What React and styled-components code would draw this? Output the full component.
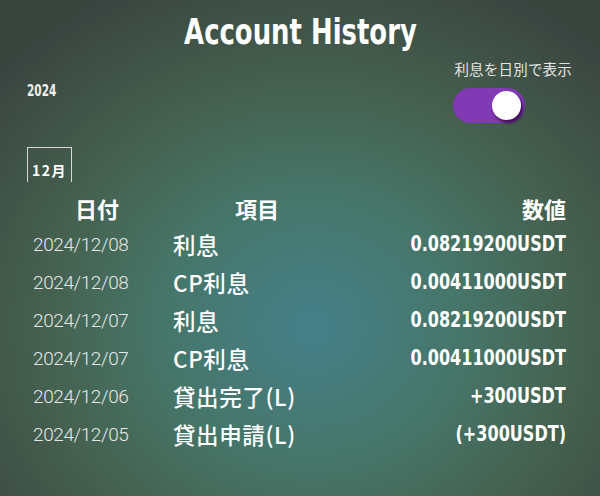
import React from "react";
import styled, { createGlobalStyle } from "styled-components";

const Global = createGlobalStyle`
  html, body { margin: 0; padding: 0; }
  body { width: 600px; height: 496px; overflow: hidden; }
`;

const Page = styled.div`
  width: 600px;
  height: 496px;
  box-sizing: border-box;
  padding: 0 34px 0 27px;
  background: radial-gradient(ellipse 70% 76% at 52% 66%, #45808a 0%, #467669 36%, #45614f 64%, #3a4540 100%);
  color: #fff;
  font-family: "Noto Sans CJK JP", sans-serif;
  display: flex;
  flex-direction: column;
`;

const Condensed = styled.span`
  display: inline-block;
  font-weight: 700;
  transform: scaleX(${(p) => p.$sx});
  transform-origin: ${(p) => p.$origin || "center"} center;
  white-space: nowrap;
`;

const condensedFont = `"DejaVu Sans Condensed", "DejaVu Sans", sans-serif`;

const Title = styled.h1`
  margin: 10px 0 0 0;
  text-align: center;
  font-family: ${condensedFont};
  font-size: 36px;
  line-height: 44px;
  color: #fff;
  padding-left: 7px;
`;

const Controls = styled.div`
  display: flex;
  justify-content: space-between;
  align-items: flex-start;
  margin-top: 6px;
`;

const Year = styled.div`
  margin-top: 22px;
  font-family: ${condensedFont};
  font-size: 15px;
  color: #f2f2f2;
`;

const ToggleBox = styled.div`
  display: flex;
  flex-direction: column;
  align-items: flex-start;
  gap: 10px;
  margin-right: -6px;
`;

const ToggleLabel = styled.div`
  font-size: 14.5px;
  line-height: 18px;
  color: #e4e4e4;
  letter-spacing: 0.2px;
`;

const Track = styled.div`
  width: 72px;
  height: 35px;
  border-radius: 18px;
  background: #8139b4;
  display: flex;
  align-items: center;
  justify-content: flex-end;
  padding-right: 4px;
  box-sizing: border-box;
  margin-left: -1px;
`;

const Knob = styled.div`
  width: 29px;
  height: 29px;
  border-radius: 50%;
  background: #fff;
  box-shadow: 2px 3px 3px rgba(40, 0, 60, 0.75);
`;

const Tab = styled.div`
  align-self: flex-start;
  margin-top: 24px;
  width: 45px;
  height: 35px;
  box-sizing: border-box;
  border: 1.5px solid #d8d8d8;
  border-bottom: none;
  display: flex;
  align-items: flex-end;
  padding: 0 0 4px 4px;
  font-size: 14px;
  font-weight: 700;
  letter-spacing: 1.5px;
  line-height: 16px;
  color: #fff;
`;

const Table = styled.div`
  display: grid;
  grid-template-columns: 140px 1fr auto;
  grid-template-rows: 34px;
  grid-auto-rows: 38px;
  align-items: center;
  margin-top: 9px;
  padding-left: 6px;
`;

const Head = styled.div`
  font-size: 22px;
  font-weight: 700;
  color: #fff;
  padding-left: ${(p) => p.$pad || 0}px;
  text-align: ${(p) => p.$align || "left"};
  line-height: 34px;
`;

const DateCell = styled.div`
  font-family: Roboto, "Liberation Sans", sans-serif;
  font-weight: 300;
  font-size: 19px;
  letter-spacing: -0.4px;
  color: #e6e6e6;
`;

const ItemCell = styled.div`
  font-size: 22.5px;
  font-weight: 500;
  color: #fff;
  letter-spacing: 0.6px;
`;

const ValueCell = styled.div`
  font-family: ${condensedFont};
  font-size: 21px;
  color: #fff;
  text-align: right;
`;

const rows = [
  ["2024/12/08", "利息", "0.08219200USDT"],
  ["2024/12/08", "CP利息", "0.00411000USDT"],
  ["2024/12/07", "利息", "0.08219200USDT"],
  ["2024/12/07", "CP利息", "0.00411000USDT"],
  ["2024/12/06", "貸出完了(L)", "+300USDT"],
  ["2024/12/05", "貸出申請(L)", "(+300USDT)"],
];

export default function App() {
  return (
    <>
      <Global />
      <Page>
        <Title>
          <Condensed $sx={0.8}>Account History</Condensed>
        </Title>
        <Controls>
          <Year>
            <Condensed $sx={0.78} $origin="left">2024</Condensed>
          </Year>
          <ToggleBox>
            <ToggleLabel>利息を日別で表示</ToggleLabel>
            <Track>
              <Knob />
            </Track>
          </ToggleBox>
        </Controls>
        <Tab>12月</Tab>
        <Table>
          <Head $pad={42}>日付</Head>
          <Head $pad={62}>項目</Head>
          <Head $align="right">数値</Head>
          {rows.map((r, i) => (
            <React.Fragment key={i}>
              <DateCell>{r[0]}</DateCell>
              <ItemCell>{r[1]}</ItemCell>
              <ValueCell>
                <Condensed $sx={0.85} $origin="right">{r[2]}</Condensed>
              </ValueCell>
            </React.Fragment>
          ))}
        </Table>
      </Page>
    </>
  );
}
